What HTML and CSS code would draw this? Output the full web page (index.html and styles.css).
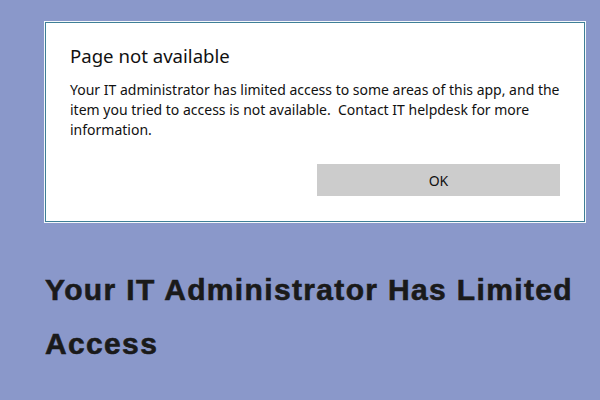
FILE: index.html
```html
<!DOCTYPE html>
<html>
<head>
<meta charset="utf-8">
<link rel="stylesheet" href="styles.css">
</head>
<body>
<div class="page">
  <div class="dialog">
    <div class="title">Page not available</div>
    <div class="msg">Your IT administrator has limited access to some areas of this app, and the item you tried to access is not available.&nbsp; Contact IT helpdesk for more information.</div>
    <div class="actions"><div class="btn">OK</div></div>
  </div>
  <h1 class="headline">Your IT Administrator Has Limited Access</h1>
</div>
</body>
</html>
```
FILE: styles.css
```css
html, body { margin: 0; padding: 0; }
body { width: 600px; height: 400px; background: #8a98ca; overflow: hidden; }
.page { padding: 21px 0 0 44px; }
.dialog {
  width: 538px;
  height: 198px;
  background: #fff;
  border: 1px solid #3f7f96;
  outline: 1px solid #f4f8fb;
  margin-left: 1px;
  margin-top: 1px;
  box-sizing: content-box;
  padding: 0;
  display: flex;
  flex-direction: column;
}
.title {
  font-family: "Noto Sans", sans-serif;
  font-size: 18.6px;
  color: #111;
  margin: 21px 0 0 24px;
  line-height: 24px;
}
.msg {
  font-family: "Noto Sans", sans-serif;
  font-size: 14px;
  line-height: 20px;
  color: #111;
  margin: 12px 10px 0 24px;
}
.actions { display: flex; justify-content: flex-end; margin: 24px 24px 0 0; }
.btn {
  width: 243px;
  height: 32px;
  background: #cccccc;
  font-family: "Noto Sans", sans-serif;
  font-size: 14px;
  color: #111;
  display: flex;
  align-items: center;
  justify-content: center;
}
.headline {
  font-family: "Liberation Sans", Arial, sans-serif;
  font-weight: bold;
  font-size: 30px;
  line-height: 54px;
  color: #1a1a1a;
  -webkit-text-stroke: 0.6px #1a1a1a;
  margin: 41px 0 0 1px;
  letter-spacing: 1.35px;
  width: 550px;
}
```
